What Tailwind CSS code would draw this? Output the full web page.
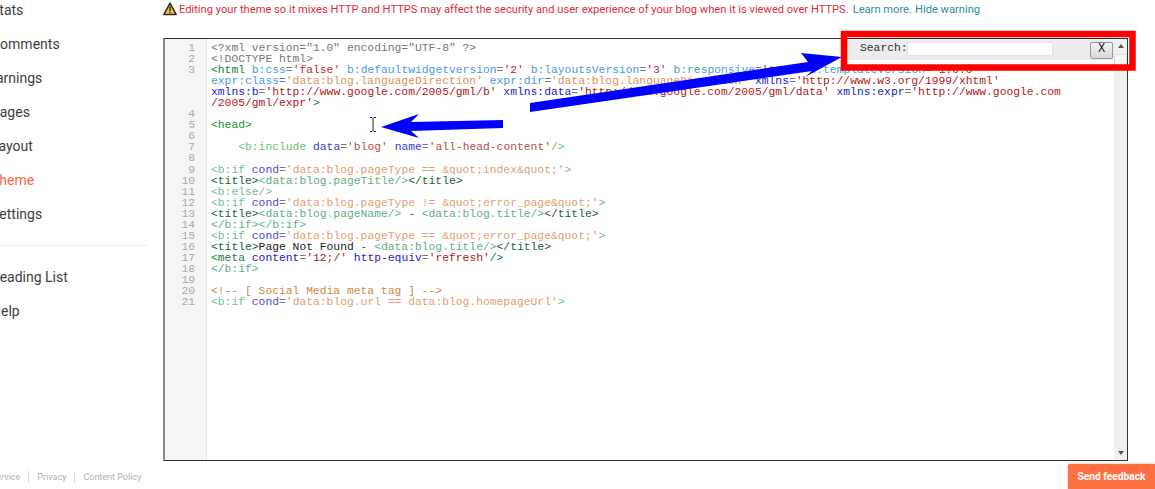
<!DOCTYPE html>
<html lang="en">
<head>
    <meta charset="UTF-8">
    <title>Theme - Edit HTML</title>
    <script src="https://cdn.jsdelivr.net/npm/@tailwindcss/browser@4"></script>
</head>
<body class="bg-white">
    <div class="relative flex w-[1155px] h-[489px] overflow-hidden font-['Roboto',sans-serif]">

        <!-- sidebar -->
        <nav class="flex flex-col w-[148px] shrink-0 h-full text-[14px] text-[#3c4043]">
            <ul class="-mt-[7px] -ml-[9px]">
                <li class="h-[34px] leading-[34px]">Stats</li>
                <li class="h-[34px] leading-[34px]">Comments</li>
                <li class="h-[34px] leading-[34px] -ml-[3px]">Earnings</li>
                <li class="h-[34px] leading-[34px]">Pages</li>
                <li class="h-[34px] leading-[34px]">Layout</li>
                <li class="h-[34px] leading-[34px] text-[#ff6545]">Theme</li>
                <li class="h-[34px] leading-[34px]">Settings</li>
            </ul>
            <div class="mt-[14px] border-t border-[#eeeeee]"></div>
            <ul class="mt-[14px] -ml-[9px]">
                <li class="h-[34px] leading-[34px]">Reading List</li>
                <li class="h-[34px] leading-[34px]">Help</li>
            </ul>
            <div class="mt-auto mb-[6px] -ml-[47px] flex items-center text-[9px] leading-[12px] text-[#b0b0b0] whitespace-nowrap">
                <span class="pr-[8px] border-r border-[#dddddd]">Terms of Service</span>
                <span class="px-[8px] border-r border-[#dddddd]">Privacy</span>
                <span class="pl-[8px]">Content Policy</span>
            </div>
        </nav>

        <main class="pl-[15px] flex-1 min-w-0">
            <!-- warning -->
            <div class="flex items-center h-[17px] text-[11.15px] whitespace-nowrap">
                <svg class="w-[14px] h-[14px] shrink-0 mr-[2px]" viewBox="0 0 14 14">
                    <path d="M7 1.2 13.2 12.6H.8Z" fill="#f5c33b" stroke="#2a2a2a" stroke-width="1.5" stroke-linejoin="round"/>
                    <path d="M7 4.6V9M7 9.8v1.4" stroke="#222" stroke-width="1.4" fill="none"/>
                </svg>
                <span class="mt-[3px] text-[#dd2c3c]">Editing your theme so it mixes HTTP and HTTPS may affect the security and user experience of your blog when it is viewed over HTTPS.</span>
                <span class="mt-[3px] ml-[4px] text-[#2b8fa3]">Learn more.</span>
                <span class="mt-[3px] ml-[3px] text-[#2b8fa3]">Hide warning</span>
            </div>

            <!-- editor -->
            <div class="relative flex mt-[21px] w-[965px] h-[423px] border border-[#333333] border-l-2 border-l-[#8a8a8a] font-['Liberation_Mono',monospace] text-[11.34px] leading-[11.05px]">
                <div class="w-[42px] shrink-0 pt-[4px] pr-[11px] text-right bg-[#f5f5f5] border-r border-[#e4e4e4] text-[#aaaaaa] whitespace-pre">1
2
3



4
5
6
7
8
9
10
11
12
13
14
15
16
17
18
19
20
21</div>
                <pre class="flex-1 min-w-0 pt-[4px] pl-[4px] font-['Liberation_Mono',monospace] text-[11.34px] leading-[11.05px] text-[#777777] overflow-hidden"><span class="text-[#777777]">&lt;?xml version="1.0" encoding="UTF-8" ?&gt;</span>
<span class="text-[#777777]">&lt;!DOCTYPE html&gt;</span>
<span class="text-[#22803a]">&lt;html</span> <span class="text-[#4a9be0]">b:css</span>=<span class="text-[#b03030]">'false'</span> <span class="text-[#4a9be0]">b:defaultwidgetversion</span>=<span class="text-[#b03030]">'2'</span> <span class="text-[#4a9be0]">b:layoutsVersion</span>=<span class="text-[#b03030]">'3'</span> <span class="text-[#4a9be0]">b:responsive</span>=<span class="text-[#b03030]">'true'</span> <span class="text-[#4a9be0]">b:templateVersion</span>=<span class="text-[#b03030]">'1.0.0'</span>
<span class="text-[#4a9be0]">expr:class</span>=<span class="text-[#d9935a]">'data:blog.languageDirection'</span> <span class="text-[#4a9be0]">expr:dir</span>=<span class="text-[#d9935a]">'data:blog.languageDirection'</span> <span class="text-[#2222cc]">xmlns</span>=<span class="text-[#b02020]">'http://www.w3.org/1999/xhtml'</span>
<span class="text-[#2222cc]">xmlns:b</span>=<span class="text-[#b02020]">'http://www.google.com/2005/gml/b'</span> <span class="text-[#2222cc]">xmlns:data</span>=<span class="text-[#b02020]">'http://www.google.com/2005/gml/data'</span> <span class="text-[#2222cc]">xmlns:expr</span>=<span class="text-[#b02020]">'http://www.google.com</span>
<span class="text-[#b02020]">/2005/gml/expr'</span><span class="text-[#22803a]">&gt;</span>

<span class="text-[#22903a]">&lt;head&gt;</span>

    <span class="text-[#70c070]">&lt;b:include</span> <span class="text-[#3a3acc]">data</span>=<span class="text-[#b05050]">'blog'</span> <span class="text-[#3a3acc]">name</span>=<span class="text-[#b05050]">'all-head-content'</span><span class="text-[#70c070]">/&gt;</span>

<span class="text-[#70c090]">&lt;b:if</span> <span class="text-[#4a4ad0]">cond</span>=<span class="text-[#dfa070]">'data:blog.pageType == &amp;quot;index&amp;quot;'</span><span class="text-[#70c090]">&gt;</span>
<span class="text-[#17603a]">&lt;title&gt;</span><span class="text-[#60b080]">&lt;data:blog.pageTitle/&gt;</span><span class="text-[#17603a]">&lt;/title&gt;</span>
<span class="text-[#70c090]">&lt;b:else/&gt;</span>
<span class="text-[#70c090]">&lt;b:if</span> <span class="text-[#4a4ad0]">cond</span>=<span class="text-[#dfa070]">'data:blog.pageType != &amp;quot;error_page&amp;quot;'</span><span class="text-[#70c090]">&gt;</span>
<span class="text-[#17603a]">&lt;title&gt;</span><span class="text-[#60b080]">&lt;data:blog.pageName/&gt;</span><span class="text-[#555555]"> - </span><span class="text-[#60b080]">&lt;data:blog.title/&gt;</span><span class="text-[#17603a]">&lt;/title&gt;</span>
<span class="text-[#60b080]">&lt;/b:if&gt;&lt;/b:if&gt;</span>
<span class="text-[#70c090]">&lt;b:if</span> <span class="text-[#4a4ad0]">cond</span>=<span class="text-[#dfa070]">'data:blog.pageType == &amp;quot;error_page&amp;quot;'</span><span class="text-[#70c090]">&gt;</span>
<span class="text-[#17603a]">&lt;title&gt;</span><span class="text-[#222222]">Page Not Found</span><span class="text-[#555555]"> - </span><span class="text-[#60b080]">&lt;data:blog.title/&gt;</span><span class="text-[#17603a]">&lt;/title&gt;</span>
<span class="text-[#22803a]">&lt;meta</span> <span class="text-[#2222cc]">content</span>=<span class="text-[#b02020]">'12;/'</span> <span class="text-[#2222cc]">http-equiv</span>=<span class="text-[#b02020]">'refresh'</span><span class="text-[#22803a]">/&gt;</span>
<span class="text-[#60b080]">&lt;/b:if&gt;</span>

<span class="text-[#c98a45]">&lt;!-- [ Social Media meta tag ] --&gt;</span>
<span class="text-[#70c090]">&lt;b:if</span> <span class="text-[#4a4ad0]">cond</span>=<span class="text-[#dfa070]">'data:blog.url == data:blog.homepageUrl'</span><span class="text-[#70c090]">&gt;</span></pre>

                <!-- scrollbar -->
                <div class="flex flex-col items-center justify-between w-[13px] shrink-0 bg-[#f0f0f0] pb-[5px] pt-[5px]">
                    <span class="w-0 h-0 border-x-[3px] border-x-transparent border-b-[4px] border-b-[#555555]"></span>
                    <span class="w-0 h-0 border-x-[3px] border-x-transparent border-t-[4px] border-t-[#555555]"></span>
                </div>
                <div class="absolute right-0 top-[15px] w-[13px] h-[14px] bg-[#f8f8f8] border border-[#dddddd]"></div>

                <!-- search panel -->
                <div class="absolute top-0 right-[13px] flex items-center w-[268px] h-[21px] bg-[#ececec] pl-[14px] pb-[2px] text-[#333333]">
                    <span class="w-[47px] mt-[1px]">Search:</span>
                    <div class="w-[146px] h-[14px] bg-white border border-[#e4e4e4]"></div>
                    <div class="flex items-center justify-center ml-[37px] w-[23px] h-[17px] mt-[3px] border border-[#999999] rounded-[2px] bg-gradient-to-b from-[#f4f4f4] to-[#d8d8d8] text-[#222222] text-[12px]">X</div>
                </div>
            </div>
        </main>

        <!-- annotations drawn on the screenshot -->
        <svg class="absolute inset-0 pointer-events-none" width="1155" height="489" viewBox="0 0 1155 489">
            <rect x="844" y="34" width="288.5" height="33.5" fill="none" stroke="#ff0000" stroke-width="6.5"/>
            <polygon fill="#0000ff" points="530,103 808,62 801,53 842,57 805,77 812,71 530,112"/>
            <polygon fill="#0000ff" points="381,127 419,114 411,122 503,120 503,128 411,131 419,138"/>
            <path d="M370 117.5h2l1 1 1-1h2M373 118.5v12M370 131.5h2l1-1 1 1h2" fill="none" stroke="#222" stroke-width="1"/>
        </svg>

        <button class="absolute right-0 bottom-0 w-[87px] h-[25px] bg-[#ff7043] rounded-tl-[2px] shadow-[0_0_3px_rgba(0,0,0,0.3)] text-white text-[10.2px] font-bold font-['Roboto',sans-serif]">Send feedback</button>
    </div>
</body>
</html>
